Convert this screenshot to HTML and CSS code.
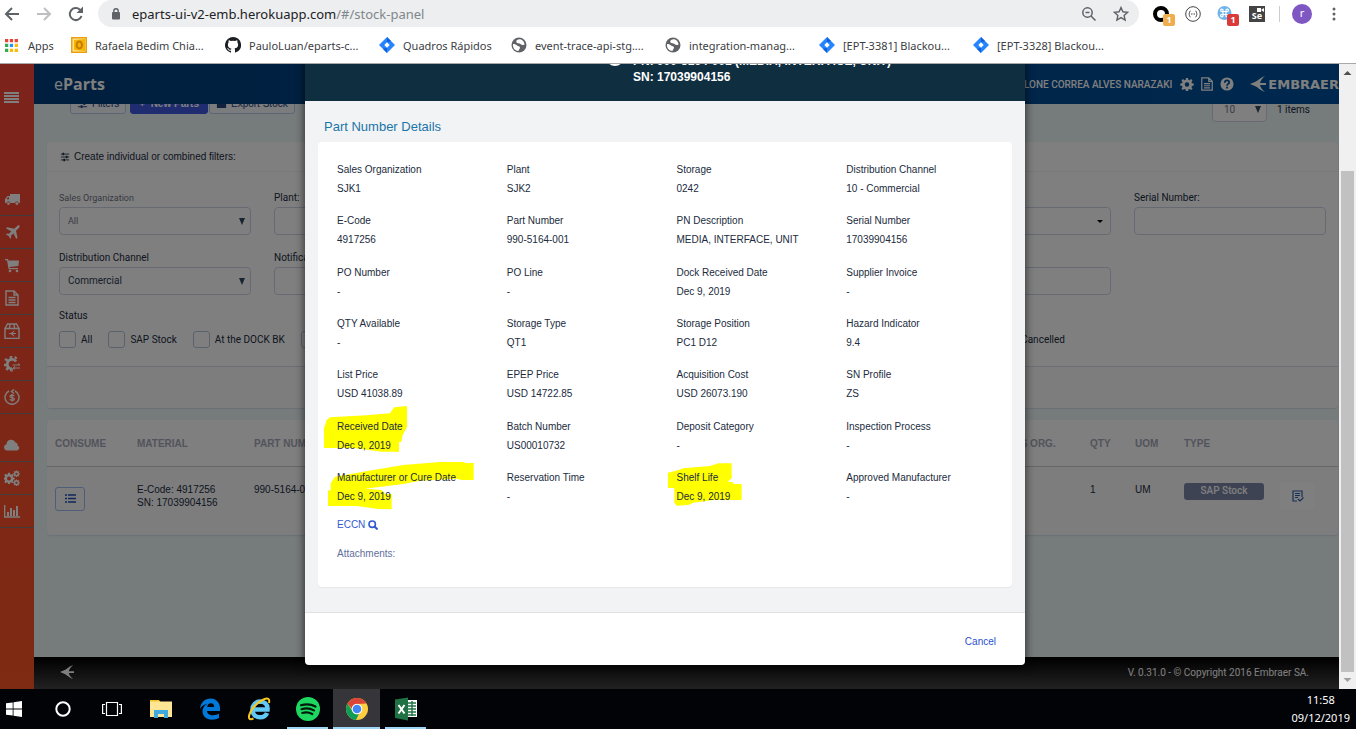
FILE: index.html
```html
<!DOCTYPE html>
<html lang="en">
<head>
<meta charset="utf-8">
<title>eParts - Stock Panel</title>
<link rel="stylesheet" href="styles.css">
</head>
<body>
<svg class="defs" aria-hidden="true">
  <symbol id="jira" viewBox="0 0 16 16"><path fill="#2684ff" d="M8 0l8 8-8 8-8-8z"/><path fill="#1260d6" d="M8 0l4 4-4 1.500zM8 16l-4-4 4-1.500z"/><path fill="#fff" d="M8 5.300L10.700 8 8 10.700 5.300 8z"/></symbol>
  <symbol id="globe" viewBox="0 0 16 16"><circle cx="8" cy="8" r="7.500" fill="#5f6368"/><path fill="#fff" d="M2 7c2 0 3 .5 4 1.500s3 .5 3 2-1 1.500-1.500 3.500C4 14 1.500 11 2 7zM6 3c1.500-1 4-1.200 5 0 1.500 1 2.500 3 2.500 4.500-1.500 1-3 .5-4-.5S6 6.500 5.500 5.500 5.500 3.500 6 3z"/></symbol>
  <symbol id="gear" viewBox="0 0 16 16"><path fill="currentColor" fill-rule="evenodd" d="M6.800 1h2.400l.4 2 1.300.6 1.800-1.200 1.600 1.700-1.200 1.800.6 1.300 2 .3v2.300l-2 .4-.6 1.300 1.200 1.800-1.600 1.600-1.800-1.100-1.300.5-.4 2H6.800l-.4-2-1.300-.5-1.800 1.100-1.600-1.600 1.200-1.800-.6-1.300-2-.4V7.500l2-.3.6-1.300-1.200-1.800 1.600-1.700 1.800 1.200L6.400 3zM8 6a2.600 2.600 0 100 5.200A2.600 2.600 0 008 6z"/></symbol>
  <symbol id="doc" viewBox="0 0 16 16"><path fill="none" stroke="currentColor" stroke-width="1.400" d="M2 1h8l4 4v10H2zM10 1v4h4"/><path stroke="currentColor" stroke-width="1.300" d="M4.500 7.500h7M4.500 10h7M4.500 12.500h7"/></symbol>
  <symbol id="sliders" viewBox="0 0 12 12"><path stroke="currentColor" d="M1 2.500h10M1 6h10M1 9.500h10"/><path stroke="currentColor" stroke-width="2" d="M4 1v3M8 4.500v3M5 8v3"/></symbol>
  <symbol id="bird" viewBox="0 0 16 16"><path fill="currentColor" d="M0 8l6-2.500c2-1 4-3.500 9-5.500-3 2.500-4.500 5-5 7h6v2h-6c.5 2.200 2 4.500 5 7-5-2-7-4.500-9-5.500z"/></symbol>
</svg>

<header class="browser">
  <div class="toolbar">
    <div class="nav">
      <button aria-label="Back"><svg viewBox="0 0 16 16"><path fill="none" stroke="#5f6368" stroke-width="2" d="M15 8H2M8 2L2 8l6 6"/></svg></button>
      <button aria-label="Forward"><svg viewBox="0 0 16 16"><path fill="none" stroke="#bdbfc2" stroke-width="2" d="M1 8h13M8 2l6 6-6 6"/></svg></button>
      <button aria-label="Reload"><svg viewBox="0 0 16 16"><path fill="none" stroke="#5f6368" stroke-width="2" d="M13.500 10A6 6 0 1112 3.800L13.500 5.500"/><path fill="#5f6368" d="M15 .5v6.500H8.500z"/></svg></button>
    </div>
    <div class="omnibox">
      <svg class="lock" viewBox="0 0 10 14"><rect x="1" y="5" width="8" height="7.500" rx="1" fill="#5f6368"/><path fill="none" stroke="#5f6368" stroke-width="1.400" d="M2.800 5.500V4a2.200 2.200 0 014.400 0v1.500"/></svg>
      <span class="url">eparts-ui-v2-emb.herokuapp.com<span>/#/stock-panel</span></span>
      <svg class="i16" viewBox="0 0 16 16"><g fill="none" stroke="#5f6368" stroke-width="1.500"><circle cx="6.500" cy="6.500" r="4.700"/><path d="M10 10l4.500 4.500M4.500 6.500h4"/></g></svg>
      <svg class="i16" viewBox="0 0 16 16"><path fill="none" stroke="#5f6368" stroke-width="1.400" d="M8 1.500l1.900 4.300 4.700.5-3.500 3.100 1 4.600L8 11.600 3.900 14l1-4.600L1.400 6.300l4.700-.5z"/></svg>
    </div>
    <div class="exts">
      <span class="ext"><svg viewBox="0 0 16 16"><circle cx="8" cy="8" r="6" fill="none" stroke="#000" stroke-width="4"/></svg><b class="badge orange">1</b></span>
      <span class="ext"><svg viewBox="0 0 16 16"><circle cx="8" cy="8" r="7.300" fill="none" stroke="#444"/><path fill="none" stroke="#444" d="M5.500 5c-1.500 0-.5 2.500-1.800 3 1.300.5.3 3 1.800 3M10.500 5c1.500 0 .5 2.500 1.800 3-1.300.5-.3 3-1.800 3M6 8h1M7.500 8h1M9 8h1"/></svg></span>
      <span class="ext"><svg viewBox="0 0 16 16"><circle cx="7.500" cy="7" r="7" fill="#6fb3ea"/><path fill="none" stroke="#fff" stroke-width="1.200" d="M6 5.500h3v3H6zM6 5.500H5A1.200 1.200 0 116 4.300zM9 5.500V4.300a1.200 1.200 0 111 1.200zM6 8.500v1.200a1.200 1.200 0 11-1-1.200zM9 8.500h1a1.200 1.200 0 11-1 1.200z"/></svg><b class="badge red">1</b></span>
      <span class="ext se">Se<svg viewBox="0 0 7 4"><path fill="#fff" d="M0 0h4v4H0zM4 2l3-2v4z"/></svg></span>
      <i class="sep"></i>
      <span class="avatar">r</span>
      <button class="dots" aria-label="Menu"><svg viewBox="0 0 4 16"><g fill="#5f6368"><circle cx="2" cy="3" r="1.500"/><circle cx="2" cy="8" r="1.500"/><circle cx="2" cy="13" r="1.500"/></g></svg></button>
    </div>
  </div>
  <nav class="bookmarks">
    <a href="#" class="apps"><svg viewBox="0 0 14 14"><g fill="#ea4335"><path d="M0 0h3.500v3.500H0zM5.200 0h3.500v3.500H5.200zM10.400 0h3.500v3.500h-3.500z"/></g><path fill="#34a853" d="M0 5.200h3.500v3.500H0zM0 10.400h3.500v3.500H0z"/><path fill="#2196f3" d="M5.200 5.200h3.500v3.500H5.200z"/><path fill="#fbbc05" d="M10.400 5.200h3.500v3.500h-3.500zM5.200 10.400h3.500v3.500H5.200zM10.400 10.400h3.500v3.500h-3.500z"/></svg>Apps</a>
    <a href="#"><svg viewBox="0 0 16 16"><path fill="#e8a113" d="M0 0h16v16H0z"/><path fill="#ffe28a" d="M1.500 1.500h13v13h-13z"/><path fill="#f5b400" d="M3 3l11-1v12L3 13z"/><ellipse cx="8.300" cy="8" rx="2.700" ry="3.500" fill="none" stroke="#c77a00" stroke-width="2"/></svg>Rafaela Bedim Chia...</a>
    <a href="#"><svg viewBox="0 0 16 16"><path fill="#1b1f23" d="M8 0a8 8 0 00-2.500 15.600c.4.100.5-.2.500-.4v-1.500c-2.200.5-2.700-.9-2.700-.9-.4-1-.9-1.200-.9-1.200-.7-.5.100-.5.100-.5.800.1 1.200.8 1.200.8.700 1.200 1.900.9 2.300.7.100-.5.300-.9.500-1.100-1.800-.2-3.600-.9-3.600-4 0-.9.300-1.600.8-2.200-.1-.2-.4-1 .1-2.100 0 0 .7-.2 2.200.8a7.500 7.500 0 014 0c1.500-1 2.200-.8 2.200-.8.400 1.100.2 1.900.1 2.100.5.600.8 1.300.8 2.200 0 3.100-1.900 3.700-3.600 3.900.3.300.5.800.5 1.500v2.300c0 .2.100.5.600.4A8 8 0 008 0z"/></svg>PauloLuan/eparts-c...</a>
    <a href="#" class="short"><svg><use href="#jira"/></svg>Quadros Rápidos</a>
    <a href="#"><svg><use href="#globe"/></svg>event-trace-api-stg....</a>
    <a href="#"><svg><use href="#globe"/></svg>integration-manag...</a>
    <a href="#"><svg><use href="#jira"/></svg>[EPT-3381] Blackou...</a>
    <a href="#"><svg><use href="#jira"/></svg>[EPT-3328] Blackou...</a>
  </nav>
</header>

<div class="viewport">
  <div class="page">
    <aside class="sidebar">
      <button class="burger" aria-label="Menu"><svg viewBox="0 0 15 11"><path stroke="#fff" stroke-width="2" d="M0 1h15M0 4h15M0 7h15M0 10h15"/></svg></button>
      <nav>
        <a href="#" aria-label="Shipping"><svg viewBox="0 0 16 16"><path fill="#fff" fill-rule="evenodd" d="M6 3h10v9h-1.200a2 2 0 00-3.800 0H6.300a2 2 0 00-3.800 0H1V8l2.500-3H6zm-1 3.200H4L2.300 8.300H5z"/><circle cx="4.400" cy="12.600" r="1.400" fill="#fff"/><circle cx="12.900" cy="12.600" r="1.400" fill="#fff"/></svg></a>
        <a href="#" aria-label="Flights"><svg viewBox="0 0 16 16"><path fill="#fff" d="M15.500 1.500c.5.800-.2 2-1 2.800L12 6.800l1.500 7-1.200 1.200-2.800-5.500-2.600 2.300.3 2-1 1-1.500-2.800L2 10.500l1-1 2 .3 2.300-2.600L2 4.500l1.200-1.200 7 1.500L12.700 2.500c.8-.8 2-1.500 2.800-1z"/></svg></a>
        <a href="#" aria-label="Cart"><svg viewBox="0 0 16 16"><path fill="#fff" d="M1 2h3l.5 1.500H15L14.400 9 5.600 10l.2 1H14v1.300H4.600L3 3.300H1z"/><circle cx="6" cy="14" r="1.300" fill="#fff"/><circle cx="13" cy="14" r="1.300" fill="#fff"/></svg></a>
        <a href="#" aria-label="Documents"><svg><use href="#doc"/></svg></a>
        <a href="#" aria-label="Parts"><svg viewBox="0 0 16 16"><path fill="none" stroke="#fff" stroke-width="1.400" d="M1 5.500h14v10H1zM1 5.500l2.500-4.500h9L15 5.500M6 1L5.500 5.500M10 1l.5 4.500"/><path fill="#fff" d="M4 10.500l3-.6L11 7 9 9.900h3v1.200H9l2 2.900-4-2.800z"/></svg></a>
        <a href="#" aria-label="Operations"><svg viewBox="0 0 16 16"><path fill="none" stroke="#fff" stroke-width="2.800" d="M12 5.500A4.800 4.800 0 108 13"/><path stroke="#fff" stroke-width="2.500" d="M7 0v3M1 3l2.500 1.500M0 9h3M2.500 14L4 11.500M7.500 12v3.500M11 2.500l1.500-1.500"/><path fill="none" stroke="#fff" d="M8.500 9H16M14 7.500L16 9M16 12H9M11 10.500L9 12l2 1.500"/></svg></a>
        <a href="#" aria-label="Costs"><svg viewBox="0 0 16 16"><path fill="none" stroke="#fff" stroke-width="1.400" d="M5 2a7 7 0 106 0M10 .5L7.500 2.500 10 4.500"/><path fill="none" stroke="#fff" stroke-width="1.300" d="M10.300 6.800C9.500 5.700 6 5.800 6 7.400s4.300.8 4.300 2.500-3.500 1.800-4.500.5M8 5v7.500"/></svg></a>
      </nav>
      <nav>
        <a href="#" aria-label="Cloud"><svg viewBox="0 0 16 16"><path fill="#fff" d="M3.500 13.500a3.200 3.200 0 01-1-6.300A4.700 4.700 0 0111.500 5.500a2.500 2.500 0 012 3 2.600 2.600 0 01-.5 5z"/></svg></a>
        <a href="#" aria-label="Settings"><svg viewBox="0 0 16 16"><use href="#gear" x="-1" y="2" width="12" height="12"/><use href="#gear" x="9" y="0" width="7" height="7"/><use href="#gear" x="9" y="9" width="7" height="7"/></svg></a>
        <a href="#" aria-label="Reports"><svg viewBox="0 0 16 16"><path fill="none" stroke="#fff" stroke-width="1.300" d="M.7 2v12H16"/><path stroke="#fff" stroke-width="2" d="M4 9v4M7 5v8M10 7v6M13 3v10"/></svg></a>
      </nav>
    </aside>

    <div class="main">
      <header class="appbar">
        <span class="brand">e<b>Parts</b></span>
        <span class="user">LONE CORREA ALVES NARAZAKI</span>
        <svg class="i14"><use href="#gear"/></svg>
        <svg class="i14"><use href="#doc"/></svg>
        <svg class="i14" viewBox="0 0 16 16"><circle cx="8" cy="8" r="7.500" fill="#fff"/><path fill="none" stroke="#00509c" stroke-width="2" d="M5.500 6.500C5.500 3 10.500 3.300 10.500 6.200 10.500 8 8 7.800 8 10M8 11v2"/></svg>
        <span class="embraer"><svg><use href="#bird"/></svg>EMBRAER</span>
      </header>

      <main class="content">
        <div class="actions">
          <button class="btn"><svg><use href="#sliders"/></svg>Filters</button>
          <button class="btn primary">+ &nbsp;New Parts</button>
          <button class="btn"><svg viewBox="0 0 12 12"><path fill="currentColor" d="M1 1h5l1 2h4v8H1z"/></svg>Export Stock</button>
          <label class="pager"><select aria-label="Items per page"><option>10</option></select><span>1 items</span></label>
        </div>

        <section class="panel filters">
          <h2><svg><use href="#sliders"/></svg>Create individual or combined filters:</h2>
          <div class="filter-body">
            <div class="fields">
              <label class="muted">Sales Organization<select class="tri"><option>All</option></select></label>
              <label>Plant:<input type="text"></label>
              <label class="c5">&nbsp;<select class="caret" aria-label="Storage"><option></option></select></label>
              <label>Serial Number:<input type="text"></label>
              <label>Distribution Channel<select class="tri"><option>Commercial</option></select></label>
              <label>Notification<input type="text"></label>
              <label class="c5">&nbsp;<input type="text" aria-label="Reference"></label>
            </div>
            <fieldset class="status">
              <legend>Status</legend>
              <div class="checks">
                <label><input type="checkbox">All</label>
                <label><input type="checkbox">SAP Stock</label>
                <label><input type="checkbox">At the DOCK BK</label>
                <label><input type="checkbox" aria-label="Other status"></label>
                <label class="last"><input type="checkbox">Cancelled</label>
              </div>
            </fieldset>
          </div>
          <div class="filter-foot"></div>
        </section>

        <section class="panel">
          <table class="stock">
            <colgroup><col class="w-consume"><col class="w-material"><col><col class="w-org"><col class="w-qty"><col class="w-uom"><col class="w-type"><col class="w-act"></colgroup>
            <thead><tr><th>CONSUME</th><th>MATERIAL</th><th>PART NUMBER</th><th>SALES ORG.</th><th>QTY</th><th>UOM</th><th>TYPE</th><th></th></tr></thead>
            <tbody><tr>
              <td><button class="listbtn" aria-label="Consume"><svg viewBox="0 0 11 9"><path stroke="#1f4fb0" stroke-width="1.600" d="M0 1h2M3 1h8M0 4.500h2M3 4.500h8M0 8h2M3 8h8"/></svg></button></td>
              <td>E-Code: 4917256<br>SN: 17039904156</td>
              <td>990-5164-001</td>
              <td></td>
              <td>1</td>
              <td>UM</td>
              <td><span class="tag">SAP Stock</span></td>
              <td><button class="notebtn" aria-label="Details"><svg viewBox="0 0 12 12"><path fill="none" stroke="#2f62ad" stroke-width="1.200" d="M5 11H1V1h9v6M3 3.500h5M3 5.500h5M3 7.500h3M6 9l2 2 3.500-3.500"/></svg></button></td>
            </tr></tbody>
          </table>
        </section>
      </main>

      <footer class="pagefoot"><svg><use href="#bird"/></svg><span>V. 0.31.0 - © Copyright 2016 Embraer SA.</span></footer>
    </div>

    <div class="backdrop">
      <div class="modal" role="dialog" aria-label="Part details">
        <header class="modal-head">
          <svg viewBox="0 0 20 20"><circle cx="10" cy="10" r="9" fill="#fff"/></svg>
          <p>PN: 990-5164-001 (MEDIA, INTERFACE, UNIT)<br>SN: 17039904156</p>
        </header>
        <div class="modal-body">
          <h3>Part Number Details</h3>
          <div class="card">
            <svg class="marker" viewBox="24 -744 2082 1335" aria-hidden="true"><g fill="#ff0">
              <path d="M60 82L170 76 240 70 252 52 291 48V110L278 135 274 155 267 157V185H215L130 174H42V115L50 90z"/>
              <path d="M75 260L190 240 280 225 390 216H463V219H491V270H455L440 266 330 272 280 282 165 296 215 300 225 312H245V358L205 357 140 348H54V302L62 300V280z"/>
              <path d="M1105 240L1120 235 1200 228 1225 220H1265V265L1253 275 1270 277V282H1295V330H1210L1150 338 1135 345 1100 347 1093 338V294H1074V248z"/>
            </g></svg>
            <dl class="details">
              <div><dt>Sales Organization</dt><dd>SJK1</dd></div>
              <div><dt>Plant</dt><dd>SJK2</dd></div>
              <div><dt>Storage</dt><dd>0242</dd></div>
              <div><dt>Distribution Channel</dt><dd>10 - Commercial</dd></div>
              <div><dt>E-Code</dt><dd>4917256</dd></div>
              <div><dt>Part Number</dt><dd>990-5164-001</dd></div>
              <div><dt>PN Description</dt><dd>MEDIA, INTERFACE, UNIT</dd></div>
              <div><dt>Serial Number</dt><dd>17039904156</dd></div>
              <div><dt>PO Number</dt><dd>-</dd></div>
              <div><dt>PO Line</dt><dd>-</dd></div>
              <div><dt>Dock Received Date</dt><dd>Dec 9, 2019</dd></div>
              <div><dt>Supplier Invoice</dt><dd>-</dd></div>
              <div><dt>QTY Available</dt><dd>-</dd></div>
              <div><dt>Storage Type</dt><dd>QT1</dd></div>
              <div><dt>Storage Position</dt><dd>PC1 D12</dd></div>
              <div><dt>Hazard Indicator</dt><dd>9.4</dd></div>
              <div><dt>List Price</dt><dd>USD 41038.89</dd></div>
              <div><dt>EPEP Price</dt><dd>USD 14722.85</dd></div>
              <div><dt>Acquisition Cost</dt><dd>USD 26073.190</dd></div>
              <div><dt>SN Profile</dt><dd>ZS</dd></div>
              <div><dt>Received Date</dt><dd>Dec 9, 2019</dd></div>
              <div><dt>Batch Number</dt><dd>US00010732</dd></div>
              <div><dt>Deposit Category</dt><dd>-</dd></div>
              <div><dt>Inspection Process</dt><dd>-</dd></div>
              <div><dt>Manufacturer or Cure Date</dt><dd>Dec 9, 2019</dd></div>
              <div><dt>Reservation Time</dt><dd>-</dd></div>
              <div><dt>Shelf Life</dt><dd>Dec 9, 2019</dd></div>
              <div><dt>Approved Manufacturer</dt><dd>-</dd></div>
            </dl>
            <a class="eccn" href="#">ECCN <svg viewBox="0 0 10 10"><circle cx="4.200" cy="4.200" r="3.200" fill="none" stroke="currentColor" stroke-width="1.600"/><path stroke="currentColor" stroke-width="2" d="M6.500 6.500l3 3"/></svg></a>
            <p class="attach">Attachments:</p>
          </div>
        </div>
        <footer class="modal-foot"><button>Cancel</button></footer>
      </div>
    </div>
  </div>

  <div class="scroll" aria-hidden="true">
    <svg viewBox="0 0 17 17"><path fill="#505050" d="M4.500 11h8l-4-4z"/></svg>
    <div class="track"><div class="thumb"></div></div>
    <svg viewBox="0 0 17 17"><path fill="#a0a0a0" d="M4.500 6h8l-4 4z"/></svg>
  </div>
</div>

<footer class="taskbar">
  <button class="start" aria-label="Start"><svg viewBox="0 0 16 16"><path fill="#fff" d="M0 2.300L6.700 1.400v6.100H0zM7.500 1.300L16 0v7.500H7.500zM0 8.400h6.700v6.200L0 13.700zM7.500 8.400H16V16l-8.500-1.200z"/></svg></button>
  <button aria-label="Search"><svg viewBox="0 0 24 24"><circle cx="12" cy="12" r="6.700" fill="none" stroke="#fff" stroke-width="2"/></svg></button>
  <button aria-label="Task view"><svg viewBox="0 0 24 24"><path fill="none" stroke="#fff" stroke-width="1.200" d="M6.500 5.500h11v13h-11zM5 7.500H2.600v9H5M19 7.500h2.400v9H19"/></svg></button>
  <button aria-label="Explorer"><svg viewBox="0 0 24 24"><path fill="#f5c32c" d="M1 3h9l1.500 2H1z"/><path fill="#ffe695" d="M1 4.500h22V20H1z"/><path fill="#3fa9e0" d="M5 21v-8h14v8h-4v-4H9v4z"/></svg></button>
  <button aria-label="Edge"><svg viewBox="0 0 24 24"><path fill="#0078d7" d="M2 12C2.500 5.500 7 1.500 12.500 1.500c6 0 9.500 4.500 9.500 9.500v3H9c.2 3 3 4.300 6 4.300 2.500 0 4.500-.8 6-1.700v4.500c-2 1-4.300 1.700-7 1.700-6 0-9.500-4-9.500-8.300 0-3.500 2-6.500 5-7.500C6 7.500 3.500 9 2 12zm7.200-2h7c0-2.400-1.200-3.800-3.300-3.800-2.200 0-3.400 1.700-3.700 3.800z"/></svg></button>
  <button aria-label="Internet Explorer"><svg viewBox="0 0 24 24"><path fill="none" stroke="#62c8f4" stroke-width="4.500" d="M6 12.500h14.500C21 7 17 4.500 13 4.500a7.700 7.700 0 00-7.500 8c0 5 3.500 7.800 7.500 7.800 3.500 0 6-1.500 7-4.300"/><path fill="none" stroke="#f9c81d" stroke-width="2" d="M22 6c1-4.500-1-5.500-5.500-3.500S6.500 9 3.500 15s-1.500 8.500 3 6.500"/></svg></button>
  <button class="open" aria-label="Spotify"><svg viewBox="0 0 24 24"><circle cx="12" cy="12" r="12" fill="#1ed760"/><path fill="none" stroke="#031a0b" stroke-width="2.200" stroke-linecap="round" d="M5 8.300c5-1.500 10.500-1 14.500 1.200M5.500 12.200c4.500-1.300 8.800-.8 12.500 1.200M6.300 16c3.500-1 7-.6 10 1"/></svg></button>
  <button class="open active" aria-label="Chrome"><svg viewBox="0 0 24 24"><circle cx="12" cy="12" r="11" fill="#ffcd40"/><path fill="#db4437" d="M2.500 6.500A11 11 0 0121.500 6.500L12 7a5 5 0 00-5 5z"/><path fill="#0f9d58" d="M2.500 6.500l5.200 8A5 5 0 0014 16.700L11 23A11 11 0 012.500 6.500z"/><circle cx="12" cy="12" r="5.300" fill="#fff"/><circle cx="12" cy="12" r="4.300" fill="#4285f4"/></svg></button>
  <button class="open" aria-label="Excel"><svg viewBox="0 0 24 24"><path fill="#fff" d="M13 3h10v17H13z"/><path stroke="#1f7244" stroke-width="1.400" d="M14 6h8M14 9h8M14 12h8M14 15h8M14 18h8M18 4v15"/><path fill="#1f7244" d="M1 2.500L14 .5v23L1 21z"/><path stroke="#fff" stroke-width="2" d="M4.500 8l6 8.500M10.500 8l-6 8.500"/></svg></button>
  <div class="clock"><time>11:58</time><time>09/12/2019</time></div>
</footer>
</body>
</html>
```
FILE: styles.css
```css
* { box-sizing: border-box; }
body {
  margin: 0;
  height: 100vh;
  display: flex;
  flex-direction: column;
  overflow: hidden;
  font-family: "Liberation Sans", Arial, sans-serif;
  font-size: 10px;
  color: #212b3d;
}
.defs { position: absolute; width: 0; height: 0; }
button { font: inherit; border: 0; background: none; padding: 0; }
a { text-decoration: none; color: inherit; }
h2, h3, p, dl, dd { margin: 0; }
svg { display: block; flex: none; }

/* Browser chrome */
.browser {
  font-family: "Noto Sans", sans-serif;
  background: #fff;
  border-bottom: 1px solid #a8a8a8;
}
.toolbar { display: flex; align-items: center; height: 27px; padding-right: 20px; }
.nav { display: flex; gap: 16px; padding-left: 4px; width: 98px; flex: none; }
.nav svg, .i16 { width: 16px; height: 16px; }
.omnibox {
  flex: 1;
  height: 27px;
  display: flex;
  align-items: center;
  gap: 16px;
  padding: 0 10px 0 13px;
  background: #edeef0;
  border-radius: 14px;
}
.lock { width: 10px; height: 14px; }
.url { flex: 1; font-size: 13px; color: #202124; margin-left: -5px; }
.url span { color: #80868b; }
.exts { display: flex; align-items: center; gap: 16px; padding-left: 14px; }
.ext { position: relative; width: 16px; height: 16px; }
.ext svg { width: 16px; height: 16px; }
.badge {
  position: absolute;
  left: 10px;
  top: 8px;
  width: 12px;
  height: 12px;
  border-radius: 2px;
  color: #fff;
  font-size: 9px;
  line-height: 12px;
  text-align: center;
}
.orange { background: #f0ad4e; }
.red { background: #d93a3a; }
.se { background: #444; color: #fff; font-size: 9px; font-weight: 700; line-height: 20px; text-align: center; }
.ext.se svg { position: absolute; top: 2px; right: 1px; width: 7px; height: 4px; }
.sep { width: 1px; height: 16px; background: #ccc; margin-right: -4px; margin-left: -2px; }
.avatar {
  width: 20px;
  height: 20px;
  border-radius: 50%;
  background: #7e57c2;
  color: #fff;
  font-size: 11px;
  line-height: 18px;
  text-align: center;
}
.dots { margin-left: 4px; }
.dots svg { width: 4px; height: 16px; }
.bookmarks { display: flex; align-items: center; height: 36px; padding-left: 5px; font-size: 11px; color: #3c4043; }
.bookmarks a { display: flex; align-items: center; gap: 8px; width: 154px; white-space: nowrap; }
.bookmarks .apps { width: 66px; gap: 10px; }
.bookmarks .short { width: 132px; }
.bookmarks svg { width: 16px; height: 16px; }
.bookmarks .apps svg { width: 13px; height: 13px; }

/* Page frame */
.viewport { flex: 1; display: flex; min-height: 0; }
.page { flex: 1; position: relative; display: flex; overflow: hidden; min-width: 0; }
.scroll { width: 17px; background: #f0f0f0; display: flex; flex-direction: column; }
.scroll svg { width: 17px; height: 17px; }
.track { flex: 1; padding: 90px 2px 0; }
.thumb { height: 100%; background: #c1c1c1; }

/* Sidebar */
.sidebar { width: 34px; flex: none; background: linear-gradient(#f84638, #fe5426); color: #fff; }
.burger { display: block; height: 119px; padding: 28px 0 80px 4px; }
.burger svg { width: 15px; height: 11px; }
.sidebar nav { margin-bottom: 15px; }
.sidebar nav a { display: flex; align-items: center; height: 33px; padding-left: 4px; border-bottom: 1px solid #86787a; }
.sidebar nav svg { width: 16px; height: 16px; }

/* App header */
.main { flex: 1; min-width: 0; display: flex; flex-direction: column; background: #ecf6f8; }
.appbar {
  position: relative;
  z-index: 1;
  flex: none;
  height: 40px;
  padding-left: 20px;
  display: flex;
  align-items: center;
  gap: 6px;
  background: linear-gradient(90deg, #003e7c, #00509c);
  color: #fff;
}
.brand { flex: 1; font: 16px "Open Sans", sans-serif; }
.user { font: 500 10px Roboto, sans-serif; margin-right: 2px; }
.i14 { width: 14px; height: 14px; }
.embraer { display: flex; align-items: center; gap: 2px; margin-left: 10px; font: 700 13px "DejaVu Sans", sans-serif; }
.embraer svg { width: 16px; height: 16px; }

/* Toolbar over the filters */
.content { flex: 1; padding: 0 1px 0 13px; }
.actions { display: flex; align-items: flex-start; height: 38px; margin-top: -14px; padding: 0 14px 0 23px; margin-bottom: 14px; }
.btn {
  height: 24px;
  margin-right: 1px;
  padding: 2px 6px 0;
  display: flex;
  align-items: center;
  gap: 4px;
  border: 1px solid #b9c8ee;
  border-radius: 3px;
  background: #f4f8fa;
  color: #24427c;
  font-size: 10px;
}
.btn svg { width: 11px; height: 11px; }
.primary { background: #3f5be0; border-color: #3f5be0; color: #fff; margin-left: 3px; padding: 2px 8px 0; font-weight: 700; }
.pager { margin-left: auto; display: flex; align-items: center; gap: 10px; height: 32px; margin-right: 14px; font-family: Roboto, sans-serif; padding-top: 6px; }
select, input[type="text"] {
  display: block;
  width: 100%;
  height: 28px;
  padding: 0 8px;
  border: 1px solid #cfd5e6;
  border-radius: 4px;
  background: #fff;
  color: #2c3a52;
  font: inherit;
  appearance: none;
}
.tri, .pager select {
  background: #fff url("data:image/svg+xml,%3Csvg xmlns='http://www.w3.org/2000/svg' width='6' height='7'%3E%3Cpath fill='%23304860' d='M0 0h6L3 7z'/%3E%3C/svg%3E") no-repeat right 5px center;
}
.caret {
  background: #fff url("data:image/svg+xml,%3Csvg xmlns='http://www.w3.org/2000/svg' width='6' height='3'%3E%3Cpath d='M0 0h6L3 3z'/%3E%3C/svg%3E") no-repeat right 7px center;
}
.pager select { width: 55px; height: 26px; padding-left: 11px; color: #707a90; }

/* Panels */
.panel { background: #fff; border-radius: 4px; box-shadow: 0 1px 1px #d5e0e6; overflow: hidden; }
.filters { margin-bottom: 12px; }
.filters h2 {
  display: flex;
  align-items: center;
  gap: 4px;
  height: 30px;
  padding-left: 13px;
  border-bottom: 1px solid #f0f1f5;
  font-size: 10px;
  font-weight: 400;
}
.filters h2 svg { width: 10px; height: 10px; }
.filter-body { padding: 17px 12px; height: 195px; border-bottom: 1px solid #d9dce6; font-family: Roboto, sans-serif; }
.filter-foot { height: 41px; background: #fafafa; }
.fields { display: grid; grid-template-columns: repeat(6, 1fr); gap: 14px 23px; }
.fields label { line-height: 18px; }
.fields select { line-height: 26px; }
.fields .c5 { grid-column: 5; }
.fields .muted, .muted select { color: #6f7482; font-size: 9px; }
.status { border: 0; margin: 14px 0 0; padding: 0; }
.status legend { padding: 0; line-height: 14px; }
.checks { display: flex; align-items: center; gap: 16px; padding-top: 8px; }
.checks label { display: flex; align-items: center; gap: 5px; }
.checks .last { margin-left: auto; margin-right: 261px; }
.checks input { appearance: none; width: 17px; height: 17px; margin: 0; border: 1px solid #b7c2da; border-radius: 3px; background: #fff; }

/* Stock table */
.stock { width: 100%; table-layout: fixed; border-collapse: collapse; }
.stock th { height: 46px; padding: 2px 0 0 8px; text-align: left; font-weight: 700; color: #a4a9b8; border-bottom: 1px solid #c9ccd2; }
.stock td { height: 69px; padding: 16px 0 0 8px; vertical-align: top; line-height: 13px; background: #fbfbfc; white-space: nowrap; }
.w-consume { width: 82px; }
.w-material { width: 117px; }
.w-org { width: 96px; }
.w-qty { width: 45px; }
.w-uom { width: 49px; }
.w-type { width: 96px; }
.w-act { width: 66px; }
.listbtn { display: grid; place-items: center; width: 30px; height: 24px; margin-top: 4px; border: 1px solid #9dbcf0; border-radius: 3px; }
.listbtn svg { width: 11px; height: 9px; }
.notebtn { display: grid; place-items: center; width: 35px; height: 26px; border-radius: 3px; background: #fff; }
.notebtn svg { width: 12px; height: 12px; }
.tag { display: block; width: 80px; height: 17px; border-radius: 3px; background: #7d87a8; color: #fff; font: 500 10px/16px Roboto, sans-serif; text-align: center; }

.pagefoot {
  flex: none;
  height: 32px;
  padding: 0 30px 2px 26px;
  display: flex;
  align-items: center;
  justify-content: space-between;
  background: linear-gradient(#000, #444);
  color: #fff;
  font: 400 10px Roboto, sans-serif;
}
.pagefoot svg { width: 14px; height: 14px; }

/* Modal */
.backdrop {
  position: absolute;
  inset: 0;
  z-index: 2;
  display: flex;
  justify-content: center;
  align-items: flex-start;
  padding-right: 9px;
  background: rgba(0, 0, 0, .5);
}
.modal { width: 100%; max-width: 720px; margin-top: -24px; border-radius: 4px; overflow: hidden; background: #fff; box-shadow: 0 2px 10px rgba(0, 0, 0, .7); }
.modal-head { display: flex; gap: 8px; height: 61px; padding: 13px 0 0 300px; background: #0f2f41; color: #fff; font-size: 12px; font-weight: 700; line-height: 16px; }
.modal-head svg { width: 20px; height: 20px; margin-top: -6px; }
.modal-body { padding: 16px 13px 25px; background: #f2f3f5; border-bottom: 1px solid #e0e1e3; }
h3 { padding-left: 6px; margin-bottom: 6px; font-size: 13px; font-weight: 400; line-height: 19px; color: #1b75a8; }
.card { position: relative; padding: 18px 0 24px 19px; background: #fff; border-radius: 4px; box-shadow: 0 1px 1px #e4e6ea; }
.marker { position: absolute; left: 0; top: 0; width: 100%; }
.details { position: relative; display: grid; grid-template-columns: repeat(4, 1fr); column-gap: 4px; align-content: space-between; min-height: 346px; line-height: 19px; }
.eccn { display: flex; align-items: center; gap: 3px; margin-top: 9px; line-height: 19px; color: #3459d0; }
.eccn svg { width: 10px; height: 10px; }
.attach { margin-top: 10px; line-height: 19px; color: #5f6f9c; }
.modal-foot { height: 52px; padding: 4px 29px 0; display: flex; align-items: center; justify-content: flex-end; }
.modal-foot button { color: #2b4fd0; }

/* Taskbar */
.taskbar { flex: none; height: 40px; display: flex; background: #010307; color: #fff; }
.taskbar button { position: relative; width: 49px; display: grid; place-items: center; }
.taskbar svg { width: 24px; height: 24px; }
.taskbar .start { width: 38px; place-items: center start; padding-left: 6px; }
.taskbar .start svg { width: 16px; height: 16px; }
.open { border-bottom: 2px solid #9fd5f5; padding-top: 2px; }
.taskbar .open { margin: 0 4px; width: 41px; }
.taskbar .active { margin: 0 1px; width: 47px; background: #36363a; }
.clock { margin-left: auto; padding: 2px 6px 0 0; display: grid; justify-items: center; font: 11px/18px "Noto Sans", sans-serif; align-content: start; }
```
